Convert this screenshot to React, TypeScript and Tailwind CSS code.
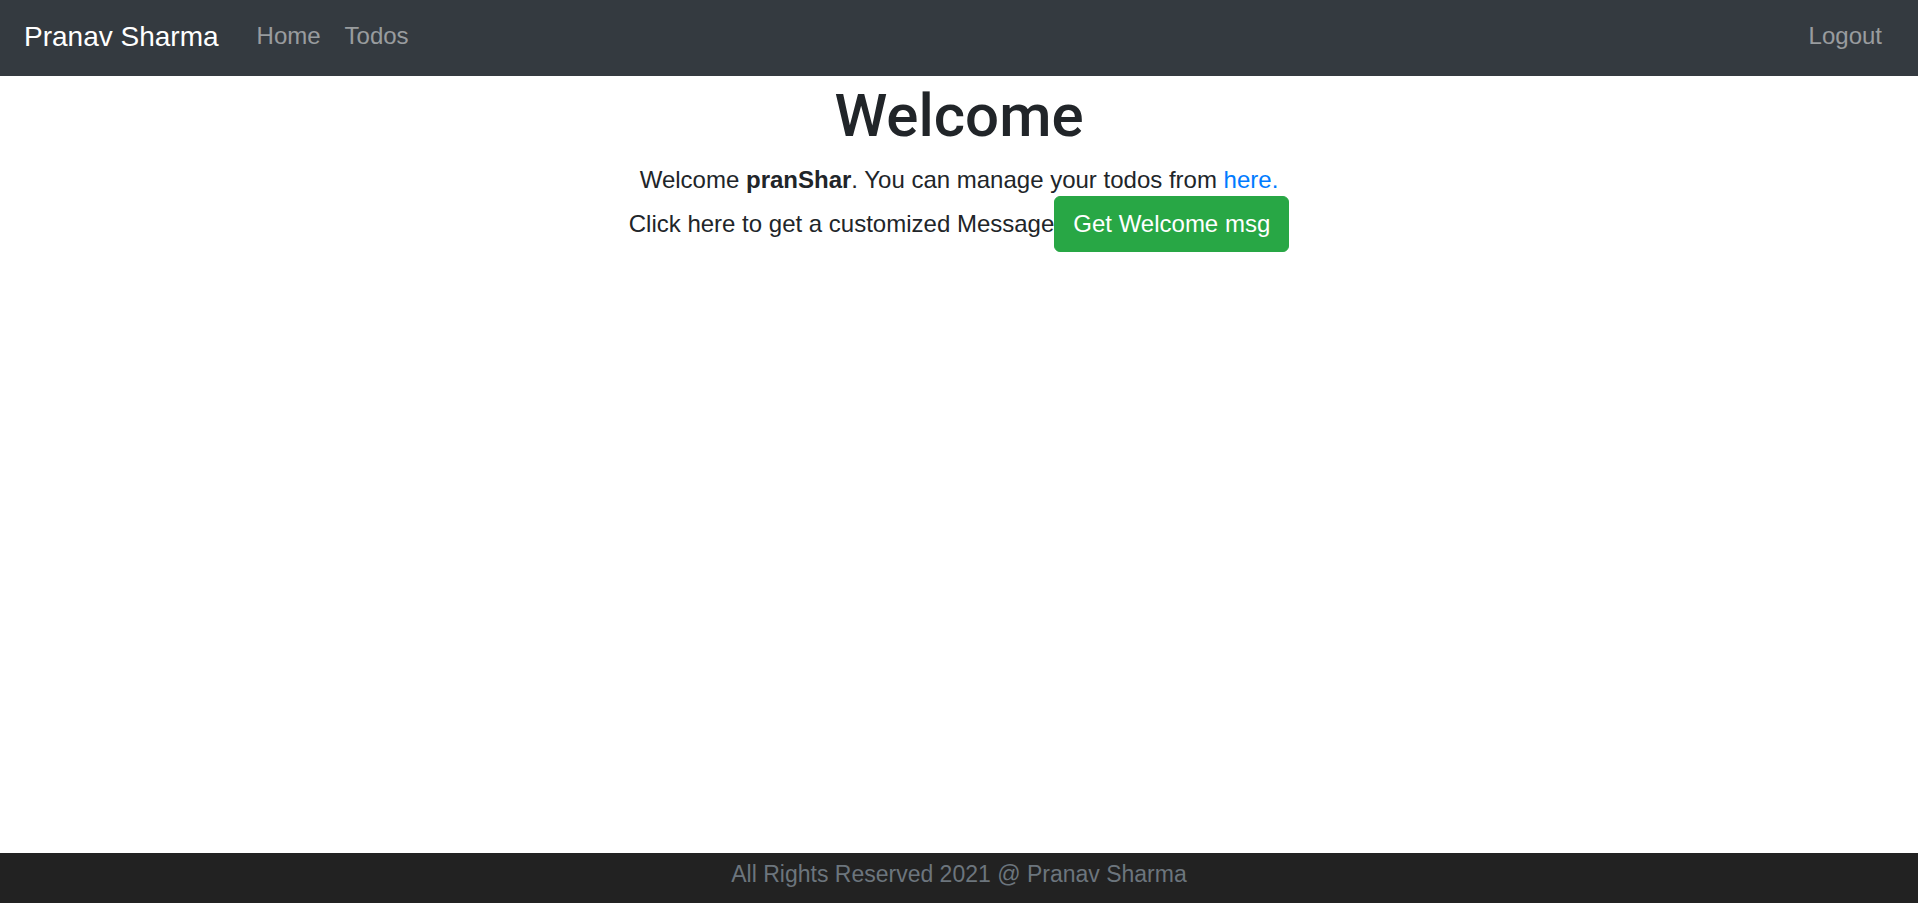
const font = { fontFamily: '"Liberation Sans", Arial, sans-serif' };
const headingFont = { fontFamily: 'Roboto, "Liberation Sans", sans-serif' };

export default function App() {
  return (
    <div className="flex min-h-screen flex-col bg-white text-[#212529]" style={font}>
      <nav className="flex h-[76px] items-center bg-[#343a40] px-[24px] pb-[4px]">
        <a href="#" className="mr-[26px] text-[28px] leading-[45px] text-white">
          Pranav Sharma
        </a>
        <div className="flex">
          <a href="#" className="px-[12px] text-[24px] text-white/50">
            Home
          </a>
          <a href="#" className="px-[12px] text-[24px] text-white/50">
            Todos
          </a>
        </div>
        <div className="ml-auto">
          <a href="#" className="px-[12px] text-[24px] text-white/50">
            Logout
          </a>
        </div>
      </nav>

      <main className="flex-1 text-center">
        <h1 className="mt-[4px] text-[60px] font-medium leading-[72px]" style={headingFont}>
          Welcome
        </h1>
        <div className="mt-[10px] text-[24px] leading-[36px]">
          Welcome <b>pranShar</b>. You can manage your todos from{' '}
          <a href="#" className="text-[#007bff]">
            here.
          </a>
        </div>
        <div className="mt-[-2px] text-[24px] leading-[36px]">
          Click here to get a customized Message
          <button className="rounded-[6px] border border-[#28a745] bg-[#28a745] px-[18px] py-[9px] text-[24px] leading-[36px] text-white">
            Get Welcome msg
          </button>
        </div>
      </main>

      <footer className="flex h-[50px] items-start justify-center bg-[#222222] pt-[6px] text-[23px] leading-[30px] text-[#6c757d]">
        All Rights Reserved 2021 @ Pranav Sharma
      </footer>
    </div>
  );
}
